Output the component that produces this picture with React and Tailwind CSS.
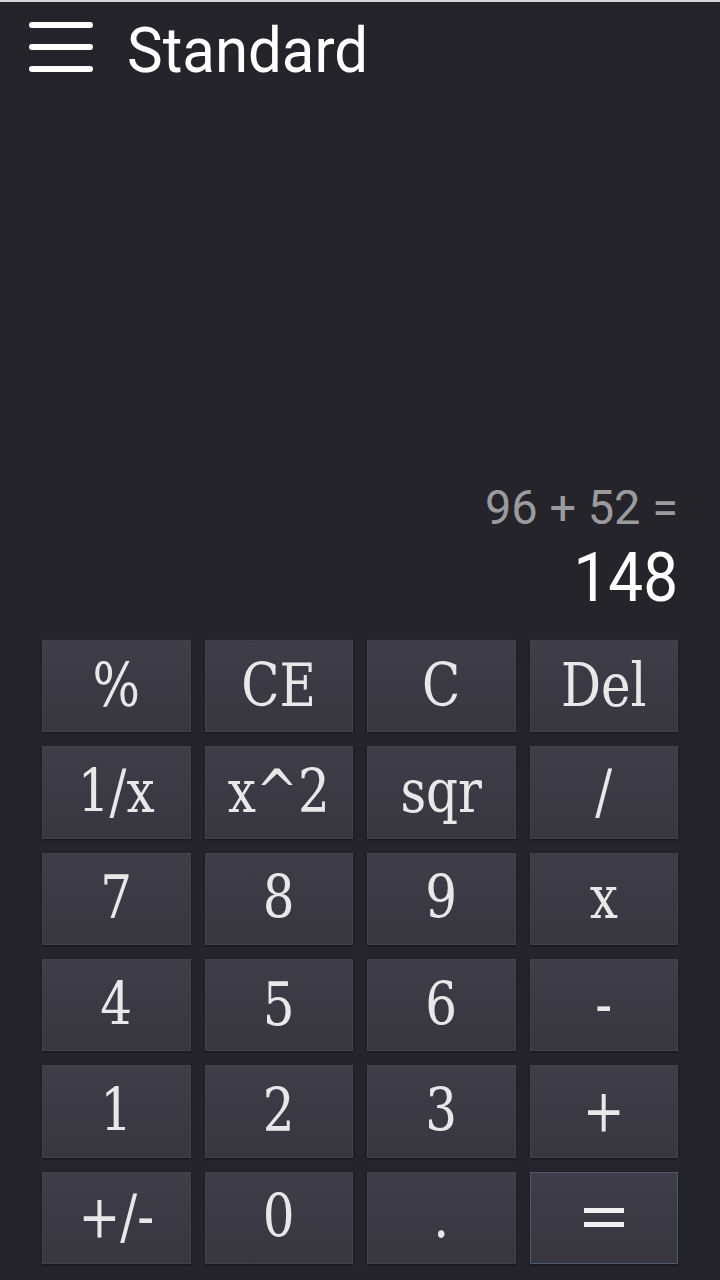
import React from "react";

const keys = [
  "%", "CE", "C", "Del",
  "1/x", "x^2", "sqr", "/",
  "7", "8", "9", "x",
  "4", "5", "6", "-",
  "1", "2", "3", "+",
  "+/-", "0", ".", "=",
];

export default function App() {
  return (
    <div className="w-[720px] h-[1280px] bg-[#25242a] flex flex-col overflow-hidden">
      <div className="h-[2px] bg-[#d6d6d8] w-full" />
      <div className="h-[98px] flex items-start">
        <div className="ml-[29px] mt-[20px] w-[64px] flex flex-col gap-[16px]">
          <div className="h-[6px] rounded-full bg-white" />
          <div className="h-[6px] rounded-full bg-white" />
          <div className="h-[6px] rounded-full bg-white" />
        </div>
        <div className="ml-[34px] mt-[13px] text-white text-[60px] leading-[72px] font-['Roboto',sans-serif]">
          <span className="inline-block scale-y-[1.04]">Standard</span>
        </div>
      </div>
      <div className="flex-1" />
      <div className="flex flex-col items-end pr-[42px] font-['Roboto',sans-serif]">
        <div className="text-[#9b9b9d] text-[47px] leading-[56px]">
          <span className="inline-block origin-center scale-y-[1.03]">96 + 52 =</span>
        </div>
        <div className="text-white text-[62px] leading-[72px] mt-[6px]">
          <span className="inline-block origin-center scale-y-[1.11]">148</span>
        </div>
      </div>
      <div className="h-[26px]" />
      <div className="mx-[42px] mb-[16px] h-[624px] grid grid-cols-4 grid-rows-6 gap-[14px]">
        {keys.map((k) => (
          <div
            key={k}
            className={
              "flex items-center justify-center bg-gradient-to-b from-[#3e3d48] to-[#383740] text-[#e8e8e8] text-[50px] font-['DejaVu_Serif',serif] shadow-[0_1px_2px_rgba(0,0,0,0.5)] border " +
              (k === "=" ? "border-[#4d5b70]" : "border-[#43424c]")
            }
          >
            {k === "=" ? (
              <div className="flex flex-col gap-[9px]">
                <div className="w-[40px] h-[5px] bg-[#f0f0f0]" />
                <div className="w-[40px] h-[5px] bg-[#f0f0f0]" />
              </div>
            ) : (
              <span className="inline-block scale-y-[1.18]">{k}</span>
            )}
          </div>
        ))}
      </div>
    </div>
  );
}
